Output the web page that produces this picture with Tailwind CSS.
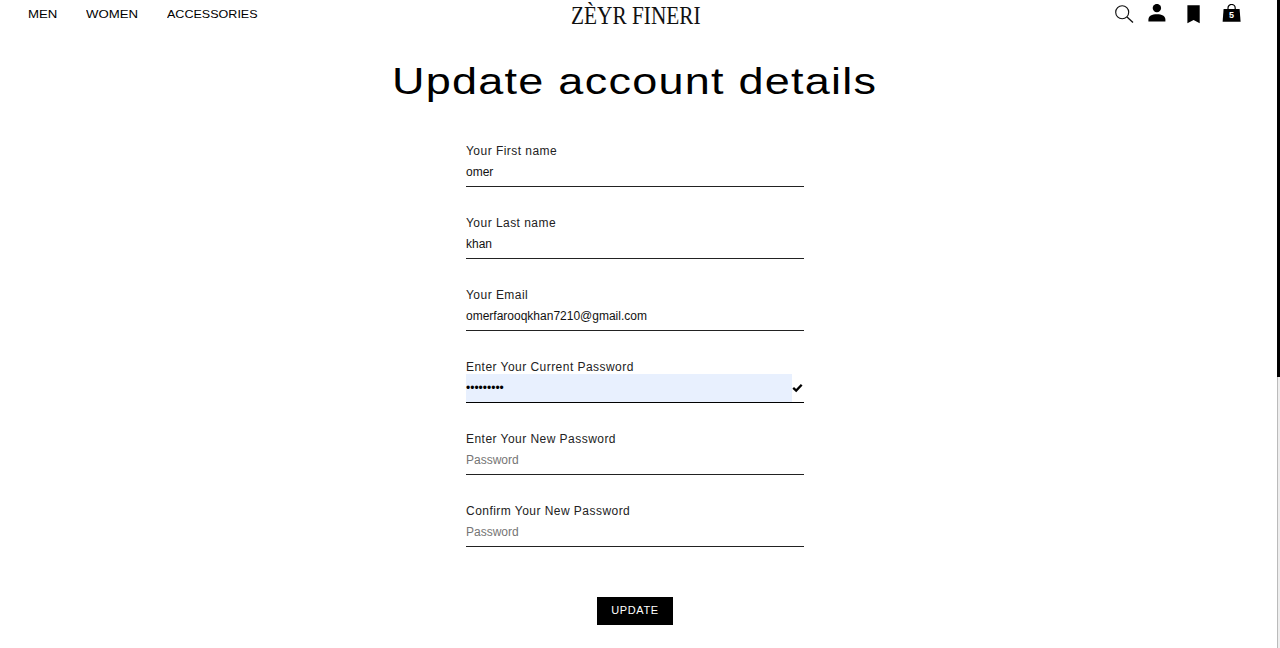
<!DOCTYPE html>
<html lang="en">
<head>
<meta charset="utf-8">
<title>Update account details</title>
<script src="https://cdn.jsdelivr.net/npm/@tailwindcss/browser@4"></script>
</head>
<body class="bg-white text-black font-['Liberation_Sans',Arial,sans-serif]">
<div class="flex h-[648px] w-[1280px] overflow-hidden">
  <div class="flex w-[1277px] flex-col">
    <header class="flex h-8 items-start">
      <nav class="flex w-[571px] pl-7 pt-[6px] text-[11px] leading-4 whitespace-nowrap">
        <a class="w-[58px]"><span class="inline-block origin-left scale-x-[1.2]">MEN</span></a>
        <a class="w-[81px]"><span class="inline-block origin-left scale-x-[1.2]">WOMEN</span></a>
        <a class="w-[100px]"><span class="inline-block origin-left scale-x-[1.14]">ACCESSORIES</span></a>
      </nav>
      <div class="w-[544px] whitespace-nowrap font-['Liberation_Serif',serif] text-[26px] leading-8 text-[#111]"><span class="inline-block origin-left scale-x-[0.82]">ZÈYR FINERI</span></div>
      <div class="flex pt-1">
        <svg class="mr-[14px] h-5 w-[19px]" viewBox="0 0 19 20" fill="none" stroke="#111" stroke-width="1.15"><circle cx="7.2" cy="8.2" r="6.5"/><path d="M12 13l6 5.600" stroke-width="1.3"/></svg>
        <svg class="mr-[21px] h-5 w-[18px]" viewBox="0 0 18 20"><circle cx="8.9" cy="4.1" r="4.2"/><path d="M.4 17.500v-1.800c0-3.600 3.500-5.400 8.500-5.400s8.500 1.800 8.500 5.400v1.800z"/></svg>
        <svg class="mr-[21px] h-5 w-[14px]" viewBox="0 0 14 20"><path d="M.4 1.200h12.300v18L6.600 16 .4 19.200z"/></svg>
        <svg class="h-5 w-5" viewBox="0 0 20 20"><path d="M1.600 5h16l1 12.800H.6z"/><path d="M6 5.500V4a3.600 3.600 0 0 1 7.200 0v1.500" fill="none" stroke="#000" stroke-width="1.2"/><text x="9.500" y="14" fill="#fff" font-size="9" font-weight="700" text-anchor="middle">5</text></svg>
      </div>
    </header>
    <main class="flex flex-col pl-[466px]">
      <h1 class="-ml-[74px] mt-[25px] h-[50px] w-[500px] whitespace-nowrap text-[36px] leading-[50px] tracking-[1px]"><span class="inline-block origin-left scale-x-[1.25]">Update account details</span></h1>
      <form class="mt-[35px] flex w-[338px] flex-col text-[12px]">
        <div class="h-[72px]"><label class="block h-[15px] leading-[18px] tracking-[0.46px] text-[#222]">Your First name</label><div class="flex h-[30px] items-center border-b border-[#222] text-[#111]"><span>omer</span></div></div>
        <div class="h-[72px]"><label class="block h-[15px] leading-[18px] tracking-[0.46px] text-[#222]">Your Last name</label><div class="flex h-[30px] items-center border-b border-[#222] text-[#111]"><span>khan</span></div></div>
        <div class="h-[72px]"><label class="block h-[15px] leading-[18px] tracking-[0.46px] text-[#222]">Your Email</label><div class="flex h-[30px] items-center border-b border-[#222] text-[#111]"><span>omerfarooqkhan7210@gmail.com</span></div></div>
        <div class="h-[72px]"><label class="block h-[15px] leading-[18px] tracking-[0.46px] text-[#222]">Enter Your Current Password</label>
          <div class="flex h-[30px] items-center border-b border-black pt-px"><span class="flex h-7 w-[326px] items-center bg-[#e8f0fe]"><span>•••••••••</span></span>
            <svg class="h-3 w-3" viewBox="0 0 12 12" fill="none" stroke="#000" stroke-width="2.3"><path d="M1.200 5.800l3 2.800L9.700 2.800"/></svg></div></div>
        <div class="h-[72px]"><label class="block h-[15px] leading-[18px] tracking-[0.46px] text-[#222]">Enter Your New Password</label><div class="flex h-[30px] items-center border-b border-[#222] text-[#757575]"><span>Password</span></div></div>
        <div class="h-[72px]"><label class="block h-[15px] leading-[18px] tracking-[0.46px] text-[#222]">Confirm Your New Password</label><div class="flex h-[30px] items-center border-b border-[#222] text-[#757575]"><span>Password</span></div></div>
        <button type="button" class="mt-[23px] ml-[131px] h-7 w-[76px] bg-black pb-[2px] text-[11px] tracking-[0.6px] text-white">UPDATE</button>
      </form>
    </main>
  </div>
  <div class="w-[3px] border-l border-[#bbb] bg-[#eee]"><div class="-ml-px h-[377px] w-[3px] bg-black"></div></div>
</div>
</body>
</html>
